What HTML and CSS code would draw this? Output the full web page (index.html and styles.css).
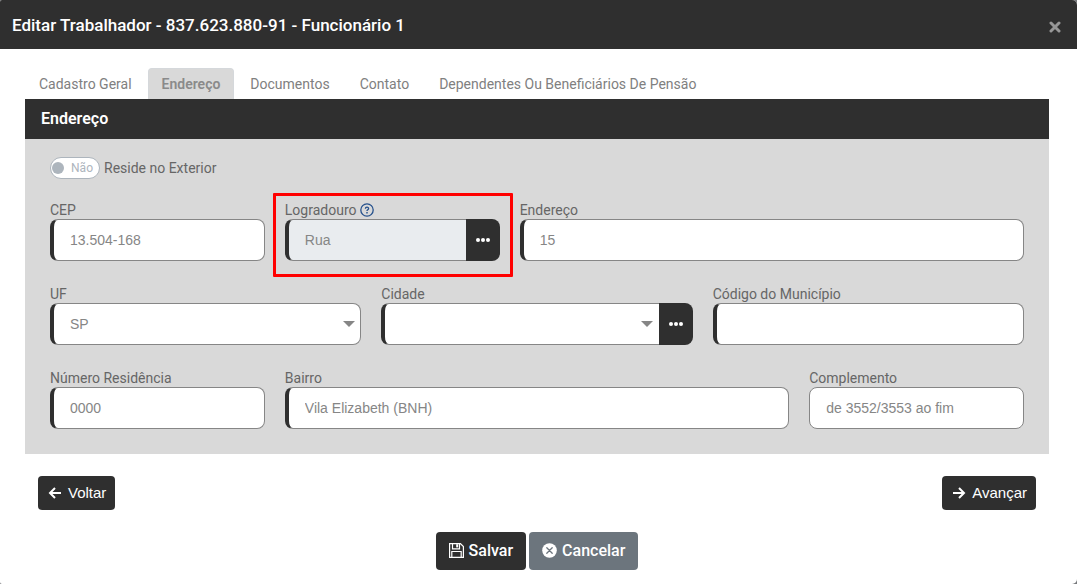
FILE: index.html
```html
<!DOCTYPE html>
<html lang="pt-BR">
<head>
    <meta charset="UTF-8">
    <meta name="viewport" content="width=device-width, initial-scale=1.0">
    <title>Editar Trabalhador</title>
    <link rel="stylesheet" href="styles.css">
</head>
<body>

    <div class="modal">
        <!-- Header -->
        <header class="modal-header">
            <h1>Editar Trabalhador - 837.623.880-91 - Funcionário 1</h1>
            <button type="button" class="close" aria-label="Fechar">
                <svg width="12" height="12" viewBox="0 0 12 12"><path d="M2 2l8 8M10 2l-8 8" fill="none" stroke="currentColor" stroke-width="3" stroke-linecap="round"/></svg>
            </button>
        </header>

        <form class="modal-body">
            <!-- Tabs -->
            <nav class="tabs">
                <a href="#geral">Cadastro Geral</a>
                <a href="#endereco" class="active">Endereço</a>
                <a href="#documentos">Documentos</a>
                <a href="#contato">Contato</a>
                <a href="#dependentes">Dependentes Ou Beneficiários De Pensão</a>
            </nav>

            <!-- Address panel -->
            <section class="panel" id="endereco">
                <h2>Endereço</h2>
                <div class="panel-body">
                    <label class="switch-row">
                        <span class="switch"><input type="checkbox"><span>Não</span></span>
                        Reside no Exterior
                    </label>

                    <div class="row row-street">
                        <div class="field">
                            <label for="cep">CEP</label>
                            <input type="text" id="cep" class="control required" value="13.504-168">
                        </div>
                        <div class="field highlight">
                            <label for="logradouro">Logradouro
                                <svg class="help" width="14" height="14" viewBox="0 0 14 14" fill="none" stroke="currentColor"><circle cx="7" cy="7" r="6.2" stroke-width="1.3"/><path d="M5.4 5.7c0-2 3.2-2 3.2-.1 0 1.2-1.6 1.2-1.6 2.4" stroke-width="1.3"/><path d="M7 9.1v1.3" stroke-width="1.4"/></svg>
                            </label>
                            <div class="group">
                                <input type="text" id="logradouro" class="control required" value="Rua" readonly>
                                <button type="button" class="more" aria-label="Buscar logradouro">
                                    <svg width="14" height="4" viewBox="0 0 14 4" fill="currentColor"><circle cx="2" cy="2" r="2"/><circle cx="7" cy="2" r="2"/><circle cx="12" cy="2" r="2"/></svg>
                                </button>
                            </div>
                        </div>
                        <div class="field">
                            <label for="rua">Endereço</label>
                            <input type="text" id="rua" class="control required" value="15">
                        </div>
                    </div>

                    <div class="row row-city">
                        <div class="field">
                            <label for="uf">UF</label>
                            <div class="select">
                                <select id="uf" class="control required">
                                    <option>SP</option>
                                </select>
                            </div>
                        </div>
                        <div class="field">
                            <label for="cidade">Cidade</label>
                            <div class="group">
                                <div class="select">
                                    <select id="cidade" class="control required">
                                        <option></option>
                                    </select>
                                </div>
                                <button type="button" class="more" aria-label="Buscar cidade">
                                    <svg width="14" height="4" viewBox="0 0 14 4" fill="currentColor"><circle cx="2" cy="2" r="2"/><circle cx="7" cy="2" r="2"/><circle cx="12" cy="2" r="2"/></svg>
                                </button>
                            </div>
                        </div>
                        <div class="field">
                            <label for="municipio">Código do Município</label>
                            <input type="text" id="municipio" class="control required">
                        </div>
                    </div>

                    <div class="row row-number">
                        <div class="field">
                            <label for="numero">Número Residência</label>
                            <input type="text" id="numero" class="control required" value="0000">
                        </div>
                        <div class="field">
                            <label for="bairro">Bairro</label>
                            <input type="text" id="bairro" class="control required" value="Vila Elizabeth (BNH)">
                        </div>
                        <div class="field">
                            <label for="complemento">Complemento</label>
                            <input type="text" id="complemento" class="control" value="de 3552/3553 ao fim">
                        </div>
                    </div>
                </div>
            </section>

            <!-- Step buttons -->
            <div class="steps">
                <button type="button" class="btn">
                    <svg width="14" height="14" viewBox="0 0 14 14" fill="none" stroke="currentColor" stroke-width="2"><path d="M13 7H2M7 2L2 7l5 5"/></svg>
                    Voltar
                </button>
                <button type="button" class="btn">
                    <svg width="14" height="14" viewBox="0 0 14 14" fill="none" stroke="currentColor" stroke-width="2"><path d="M1 7h11M7 2l5 5-5 5"/></svg>
                    Avançar
                </button>
            </div>

            <!-- Footer -->
            <footer class="actions">
                <button type="submit" class="btn">
                    <svg width="15" height="15" viewBox="0 0 15 15" fill="none" stroke="currentColor" stroke-width="1.2"><path d="M.6.6h10.8l3 3v10.8H.6zM3.5.6v5.2h7V.6M2.8 14.4V8.5h9.4v5.9"/><path d="M7.2 1.2h2v3.2h-2z" fill="currentColor" stroke="none"/></svg>
                    Salvar
                </button>
                <button type="button" class="btn cancel">
                    <svg width="15" height="15" viewBox="0 0 15 15"><circle cx="7.5" cy="7.5" r="7.3" fill="currentColor"/><path class="cross" d="M4.8 4.8l5.4 5.4M10.2 4.8l-5.4 5.4" stroke-width="1.3" stroke-linecap="round"/></svg>
                    Cancelar
                </button>
            </footer>
        </form>
    </div>

</body>
</html>
```

FILE: styles.css
```css
/* Global Styles */
* {
    margin: 0;
    padding: 0;
    box-sizing: border-box;
}

body {
    background: #77797c;
    color: #666;
    font-family: Roboto, sans-serif;
    font-size: 14px;
}

button, input, select {
    font: inherit;
}

button {
    border: none;
    cursor: pointer;
}

.modal {
    min-height: 100vh;
    background: white;
    border-radius: 2px 5px 5px 2px;
    overflow: hidden;
}

/* Header */
.modal-header {
    display: flex;
    justify-content: space-between;
    align-items: center;
    height: 49px;
    padding: 0 16px 0 12px;
    background: #2f2f2f;
    color: white;
}

.modal-header h1 {
    font-size: 17px;
    font-weight: 500;
}

.close {
    display: flex;
    padding-top: 4px;
    background: none;
    color: #979797;
}

.modal-body {
    padding: 19px 28px 14px 25px;
}

/* Tabs */
.tabs {
    display: flex;
    gap: 2px;
}

.tabs a {
    height: 31px;
    padding: 0 13px;
    border: 1px solid transparent;
    border-radius: 4px 4px 0 0;
    color: #808080;
    line-height: 30px;
    text-decoration: none;
}

.tabs a.active {
    background: #d9d9d9;
    border-color: #d5d8db;
    border-bottom: none;
    color: #8a8a8a;
    font-weight: 600;
}

/* Panel */
.panel {
    background: #d9d9d9;
}

.panel h2 {
    padding: 0 16px;
    background: #2f2f2f;
    color: white;
    font-size: 16px;
    font-weight: 600;
    line-height: 40px;
}

.panel-body {
    display: flex;
    flex-direction: column;
    gap: 24px;
    padding: 18px 25px 25px;
}

.switch-row {
    display: flex;
    align-items: center;
    gap: 4px;
    align-self: flex-start;
    margin-bottom: -2px;
}

.switch {
    display: flex;
    align-items: center;
    justify-content: space-between;
    width: 50px;
    height: 22px;
    padding: 0 6px 0 1px;
    background: white;
    border: 1px solid #adb5bd;
    border-radius: 11px;
    color: #adb5bd;
    font-size: 12px;
}

.switch input {
    appearance: none;
    width: 12px;
    height: 12px;
    background: #adb5bd;
    border-radius: 50%;
}

/* Fields */
.row {
    display: grid;
    gap: 20px;
}

.row-street {
    grid-template-columns: 23fr 23fr 54fr;
}

.row-city {
    grid-template-columns: repeat(3, 1fr);
}

.row-number {
    grid-template-columns: 23fr 54fr 23fr;
}

.field label {
    display: flex;
    align-items: center;
    gap: 4px;
    line-height: 18px;
}

.help {
    color: #24508c;
}

.control {
    display: block;
    width: 100%;
    height: 42px;
    padding: 0 16px;
    appearance: none;
    background: white;
    border: 1px solid #868686;
    border-radius: 8px;
    color: #868686;
    font-family: "Liberation Sans", sans-serif;
    outline: none;
}

.control.required {
    border-left: 4px solid #2f2f2f;
}

.control:read-only:not(select) {
    background: #e9ecef;
}

.select {
    position: relative;
    flex: 1;
}

.select::after {
    content: "";
    position: absolute;
    top: 18px;
    right: 6px;
    border: 6px solid transparent;
    border-top-color: #868686;
    border-bottom: none;
    pointer-events: none;
}

.group {
    display: flex;
}

.group .control {
    border-radius: 8px 0 0 8px;
    border-right: none;
}

.more {
    display: flex;
    flex: none;
    align-items: center;
    justify-content: center;
    width: 34px;
    background: #2f2f2f;
    border-radius: 0 8px 8px 0;
    color: white;
}

.highlight {
    position: relative;
}

.highlight::before {
    content: "";
    position: absolute;
    inset: -8px -13px -16px -12px;
    border: 3px solid red;
    border-radius: 1px;
    pointer-events: none;
}

/* Buttons */
.btn {
    display: flex;
    align-items: center;
    gap: 6px;
    height: 34px;
    padding: 0 9px 1px 10px;
    background: #2f2f2f;
    border-radius: 4px;
    color: white;
    font-family: "Liberation Sans", sans-serif;
    font-size: 15px;
}

.steps {
    display: flex;
    justify-content: space-between;
    padding: 22px 13px;
}

.actions {
    display: flex;
    justify-content: center;
    gap: 3px;
}

.actions .btn {
    gap: 5px;
    height: 38px;
    padding: 0 13px 1px;
    font-family: Roboto, sans-serif;
    font-size: 16px;
    font-weight: 500;
}

.actions .cancel {
    background: #6c757d;
}

.cross {
    stroke: #6c757d;
}
```
